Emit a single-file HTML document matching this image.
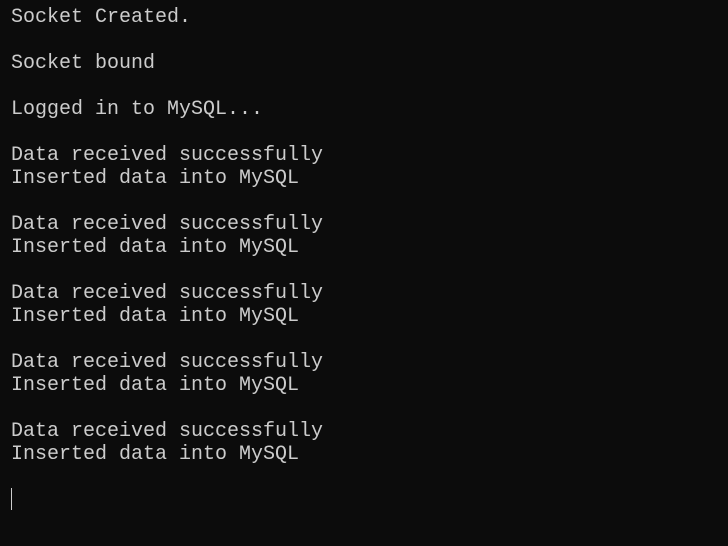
<!DOCTYPE html>
<html><head><meta charset="utf-8"><style>
html,body{margin:0;padding:0;background:#0c0c0c;width:728px;height:546px;overflow:hidden}
pre{margin:0;position:absolute;left:11px;top:6px;font-family:"Liberation Mono",monospace;font-size:20px;line-height:23px;color:#cccccc}
.cur{position:absolute;left:11px;top:488px;width:1px;height:22px;background:#cccccc}
</style></head><body>
<pre>Socket Created.

Socket bound

Logged in to MySQL...

Data received successfully
Inserted data into MySQL

Data received successfully
Inserted data into MySQL

Data received successfully
Inserted data into MySQL

Data received successfully
Inserted data into MySQL

Data received successfully
Inserted data into MySQL</pre>
<div class="cur"></div>
</body></html>
